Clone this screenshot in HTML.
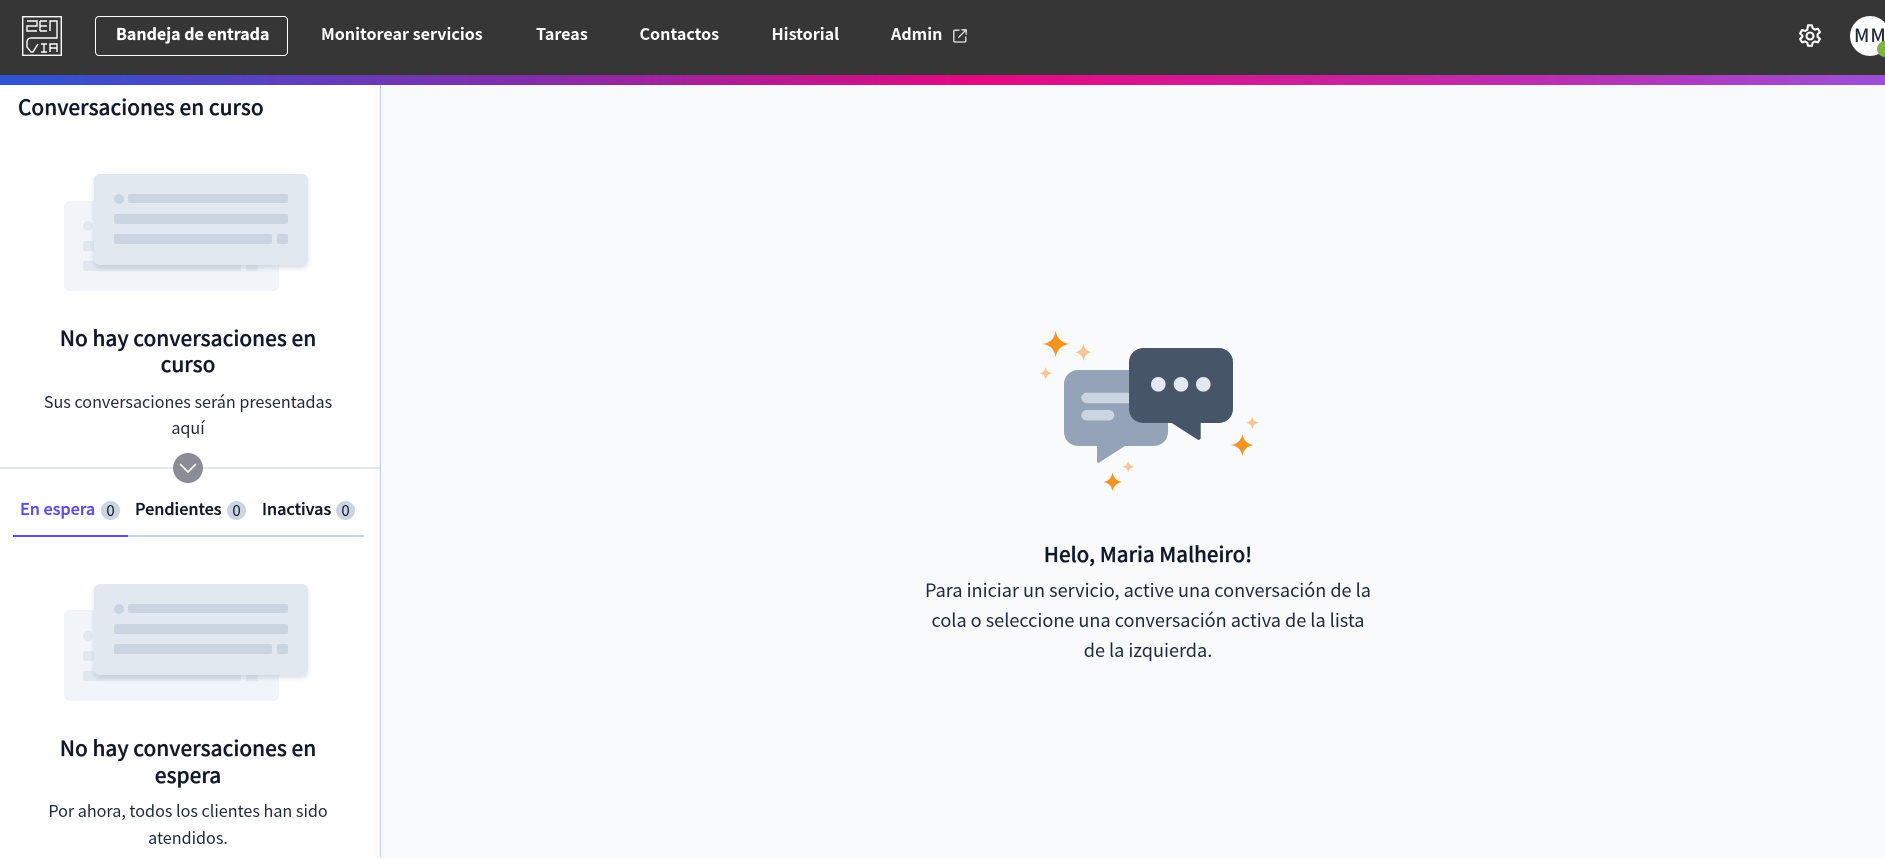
<!DOCTYPE html>
<html lang="es">
<head>
<meta charset="utf-8">
<title>Bandeja de entrada</title>
<style>
*{box-sizing:border-box}
html,body{margin:0;padding:0;width:1885px;height:860px;overflow:hidden;background:#fff}
body{position:relative;font-family:"Noto Sans CJK JP","Liberation Sans",sans-serif;color:#0f172a}
.a{position:absolute}
.t{position:absolute;white-space:nowrap;line-height:1}
.c{text-align:center;transform:translateX(-50%)}
#hdr{left:0;top:0;width:1885px;height:75px;background:#363636}
#grad{left:0;top:75px;width:1885px;height:10px;background:linear-gradient(90deg,#2f55d4 0%,#8a2aa5 30%,#e6097f 52%,#b533b5 85%,#9d4fd8 100%)}
#main{left:381px;top:85px;width:1504px;height:772px;background:#f8fafc}
#side{left:0;top:85px;width:380px;height:772px;background:linear-gradient(90deg,#fff 0,#fff 365px,#fcfcfd 380px)}
#sl{left:380px;top:85px;width:1px;height:772px;background:#c3cde2}
.n{color:#fff;font-size:16.1px;font-weight:700;top:25px}
#btn{left:95px;top:16px;width:193px;height:40px;border:1px solid #fff;border-radius:4px}
.h{font-size:20.8px;font-weight:500;color:#0f172a;-webkit-text-stroke:.3px #0f172a}
.p{font-size:16.15px;font-weight:400;color:#1e293b}
.tb{font-size:16.2px;font-weight:500;top:500px;color:#0f172a;-webkit-text-stroke:.3px currentColor}
.bd{width:19px;height:19px;border-radius:50%;background:#cbd5e1;top:501px;font-size:15px;line-height:19px;text-align:center;color:#0f172a}
.b{font-size:18.1px;font-weight:400;color:#1e293b}
</style>
</head>
<body>
<div id="hdr" class="a"></div>
<div id="grad" class="a"></div>
<div id="main" class="a"></div>
<div id="side" class="a"></div>
<div id="sl" class="a"></div>

<svg class="a" style="left:22px;top:16px" width="40" height="40" viewBox="0 0 40 40" fill="none" stroke="#fff" stroke-width="1.4">
<rect x=".7" y=".7" width="38.6" height="38.6" stroke-width="1.4"/>
<path d="M5 5H15V10H5V15H15M18 5H25M18 10H25M18 15H25M18 5V15M28 15V5H35V22H9C6.5 22 5 23.5 5 26V31L9 36H11L16 28M19 28H25M22 28V36M19 36H25M28 36V28H35V36M28 32H35"/>
</svg>

<div id="btn" class="a"></div>
<div class="t n" style="left:116px;font-size:16px;font-weight:600;-webkit-text-stroke:.2px #fff">Bandeja de entrada</div>
<div class="t n" style="left:321px">Monitorear servicios</div>
<div class="t n" style="left:536px">Tareas</div>
<div class="t n" style="left:639.5px">Contactos</div>
<div class="t n" style="left:771.5px">Historial</div>
<div class="t n" style="left:891px">Admin</div>
<svg class="a" style="left:953px;top:29px" width="14" height="14" viewBox="0 0 14 14" fill="none" stroke="#e8e8e8" stroke-width="1.3" stroke-linecap="round" stroke-linejoin="round">
<path d="M6 1.2H2.2C1.4 1.2 .8 1.8 .8 2.6V11.6C.8 12.4 1.4 13 2.2 13H11.4C12.2 13 12.8 12.4 12.8 11.6V8M5.8 8.2L13 1M8.8 .8H13.2V5.2"/>
</svg>

<svg class="a" style="left:1796px;top:22px" width="28" height="28" viewBox="0 0 24 24" fill="none" stroke="#fff" stroke-width="1.8" stroke-linecap="round" stroke-linejoin="round">
<path d="M10.3 2.8h3.4l.6 2.6 1.9 1.1 2.6-.8 1.7 3-2 1.8v2.2l2 1.8-1.7 3-2.6-.8-1.9 1.1-.6 2.6h-3.4l-.6-2.6-1.9-1.1-2.6.8-1.7-3 2-1.8V11.7l-2-1.8 1.7-3 2.6.8 1.9-1.1z"/>
<circle cx="12" cy="12" r="3"/>
</svg>

<div class="a" style="left:1850px;top:16px;width:40px;height:40px;border-radius:50%;background:#fff"></div>
<div class="t" style="left:1854px;top:26px;font-size:18.5px;font-weight:500;letter-spacing:1px;color:#1e293b">MM</div>
<div class="a" style="left:1877px;top:41px;width:16px;height:16px;border-radius:50%;background:#83b341"></div>

<div class="t h" style="left:18px;top:96px">Conversaciones en curso</div>

<!-- empty illustration 1 -->
<div class="a" style="left:63.5px;top:201px;width:215px;height:90px;border-radius:6px;background:#f1f4f8"></div>
<div class="a" style="left:83px;top:221px;width:10px;height:10px;border-radius:50%;background:#e2e8f0"></div>
<div class="a" style="left:83px;top:241px;width:20px;height:10px;border-radius:2px;background:#e2e8f0"></div>
<div class="a" style="left:83px;top:261px;width:158px;height:10px;border-radius:2px;background:#e2e8f0"></div>
<div class="a" style="left:246px;top:261px;width:12px;height:10px;border-radius:2px;background:#e2e8f0"></div>
<div class="a" style="left:93.5px;top:174px;width:214px;height:91px;border-radius:6px;background:#e2e8f0;box-shadow:0 3px 5px rgba(100,116,139,.22)"></div>
<div class="a" style="left:113.5px;top:194px;width:10px;height:10px;border-radius:50%;background:#cbd5e1"></div>
<div class="a" style="left:128px;top:194px;width:160px;height:9px;border-radius:2px;background:#cbd5e1"></div>
<div class="a" style="left:113.5px;top:214px;width:174.5px;height:10px;border-radius:2px;background:#cbd5e1"></div>
<div class="a" style="left:113.5px;top:234px;width:158px;height:10px;border-radius:2px;background:#cbd5e1"></div>
<div class="a" style="left:276.5px;top:234px;width:11.5px;height:10px;border-radius:2px;background:#cbd5e1"></div>

<div class="t h c" style="left:188px;top:327px">No hay conversaciones en</div>
<div class="t h c" style="left:188px;top:353px">curso</div>
<div class="t p c" style="left:188px;top:393px">Sus conversaciones serán presentadas</div>
<div class="t p c" style="left:188px;top:419px">aquí</div>

<div class="a" style="left:0;top:467px;width:380px;height:2px;background:#e2e8f0"></div>
<div class="a" style="left:173px;top:453px;width:30px;height:30px;border-radius:50%;background:#8a8d96"></div>
<svg class="a" style="left:178px;top:462px" width="20" height="12" viewBox="0 0 20 12" fill="none" stroke="#fff" stroke-width="1.6"><path d="M2 2L10 10L18 2"/></svg>

<div class="t tb" style="left:20px;color:#5b4bf5">En espera</div>
<div class="t bd" style="left:101px">0</div>
<div class="t tb" style="left:135px">Pendientes</div>
<div class="t bd" style="left:227px">0</div>
<div class="t tb" style="left:262px">Inactivas</div>
<div class="t bd" style="left:336px">0</div>
<div class="a" style="left:13px;top:535px;width:351px;height:2px;background:#cbd5e1"></div>
<div class="a" style="left:13px;top:535px;width:115px;height:2px;background:#5b4bf5"></div>

<!-- empty illustration 2 -->
<div class="a" style="left:63.5px;top:610px;width:215px;height:91px;border-radius:6px;background:#f1f4f8"></div>
<div class="a" style="left:83px;top:631px;width:10px;height:10px;border-radius:50%;background:#e2e8f0"></div>
<div class="a" style="left:83px;top:651px;width:20px;height:10px;border-radius:2px;background:#e2e8f0"></div>
<div class="a" style="left:83px;top:671px;width:158px;height:10px;border-radius:2px;background:#e2e8f0"></div>
<div class="a" style="left:246px;top:671px;width:12px;height:10px;border-radius:2px;background:#e2e8f0"></div>
<div class="a" style="left:93.5px;top:584px;width:214px;height:91px;border-radius:6px;background:#e2e8f0;box-shadow:0 3px 5px rgba(100,116,139,.22)"></div>
<div class="a" style="left:113.5px;top:604px;width:10px;height:10px;border-radius:50%;background:#cbd5e1"></div>
<div class="a" style="left:128px;top:604px;width:160px;height:9px;border-radius:2px;background:#cbd5e1"></div>
<div class="a" style="left:113.5px;top:624px;width:174.5px;height:10px;border-radius:2px;background:#cbd5e1"></div>
<div class="a" style="left:113.5px;top:644px;width:158px;height:10px;border-radius:2px;background:#cbd5e1"></div>
<div class="a" style="left:276.5px;top:644px;width:11.5px;height:10px;border-radius:2px;background:#cbd5e1"></div>

<div class="t h c" style="left:188px;top:737px">No hay conversaciones en</div>
<div class="t h c" style="left:188px;top:764px">espera</div>
<div class="t p c" style="left:188px;top:802px">Por ahora, todos los clientes han sido</div>
<div class="t p c" style="left:188px;top:829px">atendidos.</div>

<!-- center illustration -->
<svg class="a" style="left:1020px;top:320px" width="270" height="180" viewBox="1020 320 270 180">
<path d="M1078 370H1154a14 14 0 0 1 14 14V432a14 14 0 0 1-14 14H1125L1100 462a1.6 1.6 0 0 1-3-1V446H1078a14 14 0 0 1-14-14V384a14 14 0 0 1 14-14Z" fill="#94a3b8"/>
<rect x="1081.3" y="392.7" width="55" height="10.5" rx="5.2" fill="#cbd5e1"/>
<rect x="1081.3" y="410" width="33" height="10.5" rx="5.2" fill="#cbd5e1"/>
<path d="M1143 348H1219a14 14 0 0 1 14 14V409a14 14 0 0 1-14 14H1200.7V438a2 2 0 0 1-3 1.6L1171.7 423H1143a14 14 0 0 1-14-14V362a14 14 0 0 1 14-14Z" fill="#475569"/>
<circle cx="1158.3" cy="384.3" r="7.3" fill="#e2e8f0"/>
<circle cx="1181" cy="384.3" r="7.3" fill="#e2e8f0"/>
<circle cx="1203.3" cy="384.3" r="7.3" fill="#e2e8f0"/>
<g fill="#f7931e">
<path d="M1055.7 331Q1057.5 342 1069 344Q1057.5 346 1055.7 357Q1054 346 1043 344Q1054 342 1055.7 331Z"/>
<path d="M1242.3 434Q1244 443.5 1253.5 445Q1244 446.5 1242.3 456Q1240.7 446.5 1231 445Q1240.7 443.5 1242.3 434Z"/>
<path d="M1112.5 472.5Q1114 480.5 1122 482Q1114 483.5 1112.5 491Q1111 483.5 1103.5 482Q1111 480.5 1112.5 472.5Z"/>
</g>
<g fill="#fdc49a">
<path d="M1083.3 343.5Q1084.7 351 1091.5 352.3Q1084.7 353.6 1083.3 361Q1082 353.6 1075 352.3Q1082 351 1083.3 343.5Z"/>
<path d="M1045.7 367Q1046.7 372.4 1052 373.3Q1046.7 374.2 1045.7 380Q1044.7 374.2 1039.5 373.3Q1044.7 372.4 1045.7 367Z"/>
<path d="M1252.3 416.5Q1253.3 421.8 1258.5 422.7Q1253.3 423.6 1252.3 429Q1251.3 423.6 1246 422.7Q1251.3 421.8 1252.3 416.5Z"/>
<path d="M1128.3 461Q1129.2 465.8 1134 466.7Q1129.2 467.6 1128.3 472.5Q1127.4 467.6 1122.5 466.7Q1127.4 465.8 1128.3 461Z"/>
</g>
</svg>

<div class="t c" style="left:1148px;top:543px;font-size:20.5px;font-weight:500;color:#0f172a;-webkit-text-stroke:.3px #0f172a">Helo, Maria Malheiro!</div>
<div class="t c b" style="left:1148px;top:581px">Para iniciar un servicio, active una conversación de la</div>
<div class="t c b" style="left:1148px;top:610.5px">cola o seleccione una conversación activa de la lista</div>
<div class="t c b" style="left:1148px;top:640.5px">de la izquierda.</div>
</body>
</html>
